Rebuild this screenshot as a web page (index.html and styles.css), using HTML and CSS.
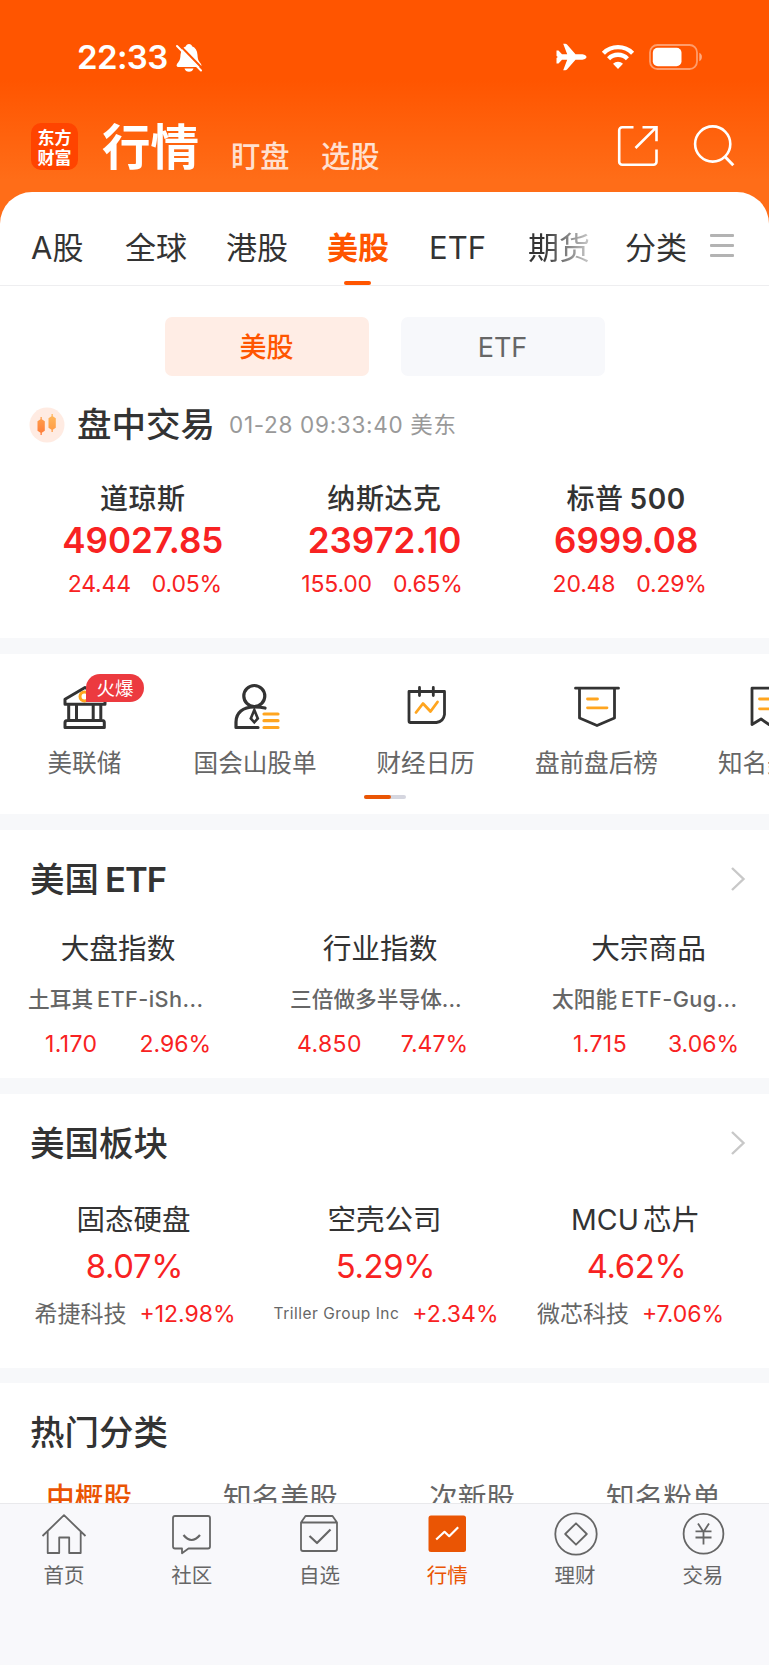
FILE: index.html
```html
<!DOCTYPE html>
<html lang="zh-CN">

<head>
    <meta charset="UTF-8">
    <meta name="viewport" content="width=device-width, initial-scale=1.0">
    <title>行情 - 东方财富</title>
    <link rel="stylesheet" href="styles.css">
</head>

<body>
    <header class="header">
        <div class="status-bar">
            <span class="time">22:33</span>
            <svg class="bell" width="26" height="28" viewBox="0 0 26 28">
                <path d="M13 0c-1.700 0-2.800 1-3 2.200C6.500 3.500 4.700 6.500 4.500 11c-.2 5-1.500 6.500-3.500 9-1 1.600-.2 3 1.200 3h21.600c1.400 0 2.200-1.400 1.200-3-2-2.500-3.300-4-3.500-9-.2-4.500-2-7.500-5.500-8.800C15.800 1 14.700 0 13 0z" fill="#fff" />
                <path d="M8.500 24.500h9c-.5 2-2.300 3.300-4.500 3.300s-4-1.300-4.500-3.300z" fill="#fff" />
                <path d="M0 4.500L5 9.500V0H0z" fill="#ff5500" />
                <path d="M2.500 0l24 24.500" stroke="#ff5500" stroke-width="2" />
                <path d="M1 2l24 24.500" stroke="#fff" stroke-width="2" stroke-linecap="round" />
            </svg>
            <div class="status-icons">
                <svg width="31" height="28" viewBox="0 0 31 28">
                    <path d="M30.500 14c0 1.500-2.500 2.800-5 2.800h-6L11 26.500c-.5.600-1 .8-1.700.8H7.200l4-10.500H6L2.500 20.500H.5V15L1.800 14 .5 13V7.500h2L6 11.200h5.200L7.200.7h2.100c.7 0 1.200.2 1.700.8l8.500 9.700h6c2.500 0 5 1.300 5 2.800z" fill="#fff" />
                </svg>
                <svg class="wifi" width="34" height="26" viewBox="0 0 34 26">
                    <g fill="none" stroke="#fff" stroke-width="4.400">
                        <path d="M2.400 9.200a20.700 20.700 0 0 1 29.200 0" />
                        <path d="M7.600 14.700a13.300 13.300 0 0 1 18.800 0" />
                    </g>
                    <path d="M17 25l-5-5.200a7.200 7.200 0 0 1 10 0z" fill="#fff" />
                </svg>
                <svg class="battery" width="54" height="26" viewBox="0 0 54 26">
                    <rect x="1" y="1" width="47" height="24" rx="7.500" fill="none" stroke="#fff" stroke-opacity=".42" stroke-width="1.800" />
                    <rect x="3.800" y="3.800" width="28.700" height="18.400" rx="5" fill="#fff" />
                    <path d="M50.300 8.800c1.800.7 2.600 2.300 2.600 4.200s-.8 3.500-2.600 4.200z" fill="#fff" fill-opacity=".5" />
                </svg>
            </div>
        </div>
        <div class="nav">
            <div class="logo">东方<br>财富</div>
            <h1 class="nav-title">行情</h1>
            <a class="nav-link">盯盘</a>
            <a class="nav-link">选股</a>
            <div class="nav-icons">
                <svg width="42" height="42" viewBox="0 0 42 42" fill="none" stroke="#fff" stroke-width="2.600">
                    <path d="M16.500 2.200H5.200a3 3 0 0 0-3 3v31.500a3 3 0 0 0 3 3h31.300a3 3 0 0 0 3-3V24.500M25.500 2.200h14v14M39 2.700L18.500 23" />
                </svg>
                <svg width="42" height="42" viewBox="0 0 42 42" fill="none" stroke="#fff" stroke-width="2.600">
                    <circle cx="19.700" cy="19" r="17.600" />
                    <path d="M31.800 31.500l8.500 8.700" stroke-width="3" />
                </svg>
            </div>
        </div>
    </header>

    <main class="page">
        <nav class="tabs">
            <a class="tab">A股</a>
            <a class="tab">全球</a>
            <a class="tab">港股</a>
            <a class="tab active">美股</a>
            <a class="tab">ETF</a>
            <a class="tab fade">期货</a>
            <a class="tab">分类</a>
            <span class="menu"><i></i><i></i><i></i></span>
        </nav>

        <section class="market">
            <div class="segment">
                <a class="seg on">美股</a>
                <a class="seg">ETF</a>
            </div>
            <div class="session">
                <svg width="36" height="36" viewBox="0 0 36 36">
                    <defs>
                        <linearGradient id="c1" x1="0" y1="0" x2="0" y2="1">
                            <stop offset="0" stop-color="#ffa04d" />
                            <stop offset="1" stop-color="#ff7a38" />
                        </linearGradient>
                        <linearGradient id="c2" x1="0" y1="0" x2="0" y2="1">
                            <stop offset="0" stop-color="#ffb85c" />
                            <stop offset="1" stop-color="#ff9a45" />
                        </linearGradient>
                    </defs>
                    <circle cx="18" cy="18" r="17.500" fill="#ffebe2" />
                    <path d="M12.800 10v2.300l3 2v9.500l-3 2V28h-1.300v-2.200l-3-2v-9.500l3-2V10z" fill="url(#c1)" />
                    <path d="M23.800 7v2.300l3 2v9.500l-3 2V25h-1.300v-2.200l-3-2v-9.500l3-2V7z" fill="url(#c2)" />
                </svg>
                <h2>盘中交易</h2>
                <span class="session-time">01-28 09:33:40 美东</span>
            </div>
            <div class="indices">
                <div class="index">
                    <div class="index-name">道琼斯</div>
                    <div class="index-value">49027.85</div>
                    <div class="index-change"><span>24.44</span><span>0.05%</span></div>
                </div>
                <div class="index">
                    <div class="index-name">纳斯达克</div>
                    <div class="index-value">23972.10</div>
                    <div class="index-change"><span>155.00</span><span>0.65%</span></div>
                </div>
                <div class="index">
                    <div class="index-name">标普<b>500</b></div>
                    <div class="index-value">6999.08</div>
                    <div class="index-change"><span>20.48</span><span>0.29%</span></div>
                </div>
            </div>
        </section>

        <section class="tools">
            <div class="tool-list">
                <a class="tool">
                    <svg width="48" height="48" viewBox="0 0 48 48" fill="none" stroke="#333" stroke-width="3" stroke-linejoin="round">
                        <circle cx="23.500" cy="18.500" r="4.500" stroke="#ffa51f" />
                        <path d="M4 26.200v-5L24 9.500l20 11.700v5zM7.700 26.500v16M15.500 26.500v16M32.200 26.500v16M39.800 26.500v16M6.500 42.500h34.800q2 0 2 2v5H4v-5q0-2 2.500-2z" />
                    </svg>
                    <em class="hot">火爆</em>
                    <span>美联储</span>
                </a>
                <a class="tool">
                    <svg width="48" height="48" viewBox="0 0 48 48" fill="none" stroke="#333" stroke-width="3.200" stroke-linecap="round">
                        <circle cx="22.300" cy="18" r="10.500" />
                        <path d="M26 49.500H4v-5.500C4 34.500 11 29 22 29q7 0 11 1" stroke-linejoin="round" />
                        <path d="M22.300 32l-3.500 8.500 3.500 3.800L25.800 40.500z" stroke-width="2.600" />
                        <path d="M32 36h14M32 42.700h14M32 49.500h14" stroke="#ffa51f" />
                    </svg>
                    <span>国会山股单</span>
                </a>
                <a class="tool">
                    <svg width="48" height="48" viewBox="0 0 48 48" fill="none" stroke="#333" stroke-width="2.800" stroke-linecap="round" stroke-linejoin="round">
                        <path d="M6 13.500h35.500v23q-1 7-8 8H7.500Q6 44.500 6 43zM16.500 9.500v8M30.300 9.500v8" />
                        <path d="M13 34.500l7-9 7.500 8 7-9.500" stroke="#ffa51f" />
                    </svg>
                    <span>财经日历</span>
                </a>
                <a class="tool">
                    <svg width="48" height="48" viewBox="0 0 48 48" fill="none" stroke="#333" stroke-width="2.800" stroke-linecap="round" stroke-linejoin="round">
                        <path d="M2.500 10.200h43M6.500 10.500V40L24 47.500 41.500 40V10.500" />
                        <path d="M14.500 21h10M14.500 29.800h19.500" stroke="#ffa51f" />
                    </svg>
                    <span>盘前盘后榜</span>
                </a>
                <a class="tool">
                    <svg width="48" height="48" viewBox="0 0 48 48" fill="none" stroke="#333" stroke-width="2.800" stroke-linecap="round" stroke-linejoin="round">
                        <path d="M8 10.200h34V46.500l-8-5.500-9 5.500-8-5.500-9 5.500z" />
                        <path d="M15.500 21h14M15.500 30.800h14" stroke="#ffa51f" />
                    </svg>
                    <span>知名美股</span>
                </a>
            </div>
            <div class="pager"><i></i></div>
        </section>

        <section class="etf">
            <div class="section-head">
                <h2>美国<b>ETF</b></h2>
                <svg width="16" height="28" viewBox="0 0 16 28" fill="none" stroke="#c8c8c8" stroke-width="2.400">
                    <path d="M2 3l11.500 11L2 25" />
                </svg>
            </div>
            <div class="etf-list">
                <div class="etf-item">
                    <div class="etf-type">大盘指数</div>
                    <div class="etf-name">土耳其<b>ETF-iSh...</b></div>
                    <div class="etf-change"><span>1.170</span><span>2.96%</span></div>
                </div>
                <div class="etf-item">
                    <div class="etf-type">行业指数</div>
                    <div class="etf-name">三倍做多半导体...</div>
                    <div class="etf-change"><span>4.850</span><span>7.47%</span></div>
                </div>
                <div class="etf-item">
                    <div class="etf-type">大宗商品</div>
                    <div class="etf-name">太阳能<b>ETF-Gug...</b></div>
                    <div class="etf-change"><span>1.715</span><span>3.06%</span></div>
                </div>
            </div>
        </section>

        <section class="sector">
            <div class="section-head">
                <h2>美国板块</h2>
                <svg width="16" height="28" viewBox="0 0 16 28" fill="none" stroke="#c8c8c8" stroke-width="2.400">
                    <path d="M2 3l11.500 11L2 25" />
                </svg>
            </div>
            <div class="sector-list">
                <div class="sector-item">
                    <div class="sector-name">固态硬盘</div>
                    <div class="sector-value">8.07%</div>
                    <div class="sector-stock"><span>希捷科技</span><em>+12.98%</em></div>
                </div>
                <div class="sector-item">
                    <div class="sector-name">空壳公司</div>
                    <div class="sector-value">5.29%</div>
                    <div class="sector-stock"><span class="small">Triller Group Inc</span><em>+2.34%</em></div>
                </div>
                <div class="sector-item">
                    <div class="sector-name"><b>MCU</b>芯片</div>
                    <div class="sector-value">4.62%</div>
                    <div class="sector-stock"><span>微芯科技</span><em>+7.06%</em></div>
                </div>
            </div>
        </section>

        <section class="category">
            <div class="section-head">
                <h2>热门分类</h2>
            </div>
            <div class="category-tabs">
                <a class="active">中概股</a>
                <a>知名美股</a>
                <a>次新股</a>
                <a>知名粉单</a>
            </div>
        </section>
    </main>

    <footer class="tabbar">
        <a class="bar-item">
            <svg width="46" height="46" viewBox="0 0 46 46">
                <path d="M1.500 24L23 3.200 44.500 24M6.700 19.500V41h11.500V25.500h10V41h11.500V19.500" />
            </svg>
            <span>首页</span>
        </a>
        <a class="bar-item">
            <svg width="46" height="46" viewBox="0 0 46 46">
                <path d="M6 4h33q2 0 2 2v28.500q0 2-2 2H19.500L13 41.300v-4.800H6q-2 0-2-2V6q0-2 2-2z" />
                <path d="M14.500 23q8 10 16.500 0" stroke-width="2.200" />
            </svg>
            <span>社区</span>
        </a>
        <a class="bar-item">
            <svg width="46" height="46" viewBox="0 0 46 46">
                <path d="M5 10.500L9.500 4h27l4.500 6.500v26.500q0 2-2 2h-32q-2 0-2-2zM5 10.500h36" />
                <path d="M13.500 24l7.500 7 13.500-13.500" stroke-width="2.200" />
            </svg>
            <span>自选</span>
        </a>
        <a class="bar-item active">
            <svg width="46" height="46" viewBox="0 0 46 46">
                <rect x="4.500" y="3.500" width="37.500" height="36.500" rx="2.500" fill="#ea5504" stroke="none" />
                <path d="M12.200 27.500l8.300-7.700 4.700 4.400 9-9" stroke="#fff" stroke-width="2.200" />
            </svg>
            <span>行情</span>
        </a>
        <a class="bar-item">
            <svg width="46" height="46" viewBox="0 0 46 46">
                <circle cx="24" cy="22" r="20.700" />
                <path d="M24 11.300L34.800 22 24 32.700 13.200 22z" />
            </svg>
            <span>理财</span>
        </a>
        <a class="bar-item">
            <svg width="46" height="46" viewBox="0 0 46 46">
                <circle cx="23.500" cy="21.700" r="19.900" />
                <path d="M18 11.500L23.500 20l5.500-8.500M23.500 20v12.500M15.500 19.300h16M15.500 25.500h16" />
            </svg>
            <span>交易</span>
        </a>
    </footer>
</body>

</html>
```

FILE: styles.css
```css
* {
    box-sizing: border-box;
}

body {
    margin: 0;
    width: 769px;
    height: 1665px;
    display: flex;
    flex-direction: column;
    overflow: hidden;
    font-family: Inter, "Noto Sans CJK SC", sans-serif;
    color: #333;
    background: #fff;
}

h1, h2 {
    margin: 0;
}

b {
    font-weight: inherit;
}

em, i {
    font-style: normal;
}

svg {
    display: block;
    flex: none;
    overflow: visible;
}

/* Header */
.header {
    flex: none;
    height: 224px;
    background: linear-gradient(#ff5500 0, #ff5500 80px, #ff6d18 180px, #ff6d18 224px);
    color: #fff;
}

.status-bar {
    display: flex;
    align-items: center;
    height: 114px;
    padding: 0 66px 0 77px;
}

.time {
    font-size: 33px;
    font-weight: 600;
    letter-spacing: -0.6px;
    width: 99px;
}

.bell {
    margin-top: 1px;
}

.status-icons {
    display: flex;
    align-items: center;
    margin-left: auto;
}

.wifi {
    margin-left: 14px;
}

.battery {
    margin-left: 14px;
}

.nav {
    display: flex;
    height: 64px;
    padding: 0 34px 0 31px;
}

.logo {
    width: 47px;
    height: 47px;
    margin-top: 9px;
    padding-top: 4px;
    border-radius: 10px;
    background: #ff4400;
    font-family: "Noto Sans CJK SC", sans-serif;
    font-size: 17px;
    font-weight: 700;
    line-height: 19.500px;
    text-align: center;
}

.nav-title {
    margin-left: 24px;
    width: 129px;
    font-size: 48.500px;
    font-weight: 700;
    line-height: 67px;
}

.nav-link {
    width: 90px;
    font-size: 29.300px;
    font-weight: 500;
    line-height: 86px;
    color: #ffe0d0;
}

.nav-icons {
    display: flex;
    gap: 34px;
    margin-left: auto;
    padding-top: 11px;
}

/* Page */
.page {
    flex: none;
    height: 1311px;
    margin-top: -32px;
    border-radius: 32px 32px 0 0;
    background: #fff;
    overflow: hidden;
}

.tabs {
    display: flex;
    height: 94px;
    padding-left: 31px;
    border-bottom: 1px solid #eeeef0;
    font-size: 31px;
    line-height: 111px;
    white-space: nowrap;
}

.tab {
    position: relative;
    flex: none;
    width: 101px;
}

.tab:first-child {
    width: 94px;
}

.tab:nth-child(5) {
    width: 100px;
    padding-left: 1px;
}

.tab:nth-child(6) {
    width: 97px;
}

.tab:nth-child(7) {
    width: 85px;
}

.tab.active {
    color: #ff5500;
    font-weight: 700;
}

.tab.active::after {
    content: "";
    position: absolute;
    left: 17px;
    bottom: 0;
    width: 27px;
    height: 4px;
    border-radius: 2px;
    background: #ff5500;
}

.tab.fade {
    color: transparent;
    background: linear-gradient(90deg, #333 15px, #ccc 62px);
    background-clip: text;
    -webkit-background-clip: text;
}

.menu {
    display: flex;
    flex: none;
    flex-direction: column;
    gap: 7px;
    width: 24px;
    padding-top: 42px;
}

.menu i {
    height: 3px;
    border-radius: 1px;
    background: #b3b3b3;
}

/* Market overview */
.market {
    height: 368px;
    padding-top: 31px;
    border-bottom: 16px solid #f7f8fa;
}

.segment {
    display: flex;
    justify-content: center;
    gap: 32px;
}

.seg {
    width: 204px;
    height: 59px;
    border-radius: 7px;
    background: #f7f8fb;
    font-size: 27px;
    line-height: 62px;
    text-align: center;
    color: #666;
}

.seg.on {
    background: #ffede5;
    color: #ff5500;
    font-weight: 500;
}

.session {
    display: flex;
    align-items: center;
    height: 50px;
    margin-top: 24px;
    padding-left: 29px;
}

.session h2 {
    width: 152px;
    margin-left: 12px;
    font-size: 34.500px;
    font-weight: 500;
    line-height: 52px;
}

.session-time {
    font-size: 22.500px;
    line-height: 52px;
    letter-spacing: 0.7px;
    color: #999;
}

.indices {
    display: grid;
    grid-template-columns: repeat(3, 1fr);
    padding: 27px 22px 0;
    text-align: center;
}

.index-name {
    font-size: 28px;
    font-weight: 500;
    line-height: 44px;
    letter-spacing: 0.6px;
}

.index-name b {
    margin-left: 6px;
    font-weight: 600;
}

.index-value {
    margin-top: -2px;
    font-size: 35px;
    font-weight: 600;
    line-height: 42px;
    color: #f82222;
}

.index-change {
    display: flex;
    justify-content: center;
    gap: 21px;
    margin-top: 1px;
    padding-left: 4px;
    font-size: 23px;
    line-height: 44px;
    letter-spacing: -0.2px;
    color: #f82222;
}

.index:nth-child(2) .index-change {
    padding: 0 5px 0 0;
}

.index:nth-child(3) .index-change {
    padding-left: 7px;
}

/* Shortcuts */
.tools {
    height: 176px;
    border-bottom: 16px solid #f7f8fa;
    overflow: hidden;
}

.tool-list {
    display: flex;
    width: 860px;
    height: 141px;
}

.tool {
    position: relative;
    flex: none;
    width: 170.700px;
    padding-top: 24px;
    display: flex;
    flex-direction: column;
    align-items: center;
    font-size: 24.600px;
    line-height: 36px;
    color: #666;
}

.tool span {
    margin: 19px 2px 0 0;
}

.hot {
    position: absolute;
    left: 86px;
    top: 20px;
    width: 58px;
    height: 28px;
    border-radius: 14px 14px 14px 0;
    background: #ec3a3f;
    color: #fff;
    font-size: 18.500px;
    line-height: 28px;
    text-align: center;
}

.pager {
    width: 42px;
    height: 4px;
    margin: 0 auto;
    border-radius: 2px;
    background: #d5d6df;
}

.pager i {
    display: block;
    width: 27px;
    height: 4px;
    border-radius: 2px;
    background: #ea5504;
}

/* Section titles */
.section-head {
    display: flex;
    align-items: center;
    justify-content: space-between;
    height: 98px;
    padding: 0 23px 0 30px;
}

.section-head h2 {
    font-size: 34.500px;
    font-weight: 500;
    line-height: 50px;
    padding-top: 2px;
}

.section-head b {
    margin-left: 6px;
    font-weight: 600;
    letter-spacing: -1px;
}

/* ETF */
.etf {
    height: 264px;
    border-bottom: 16px solid #f7f8fa;
}

.etf-list {
    display: grid;
    grid-template-columns: 262px 262px 200px;
    padding-left: 28px;
}

.etf-type {
    width: 180px;
    font-size: 28.700px;
    line-height: 42px;
    text-align: center;
}

.etf-item:last-child .etf-type {
    width: 193px;
}

.etf-name {
    margin-top: 9px;
    font-size: 21.700px;
    font-weight: 500;
    line-height: 40px;
    color: #666;
}

.etf-name b {
    margin-left: 4px;
    letter-spacing: 0.4px;
}

.etf-change {
    display: flex;
    justify-content: space-between;
    width: 183px;
    margin-top: 1px;
    padding-left: 17px;
    font-size: 23px;
    line-height: 48px;
    color: #f82222;
}

.etf-change span:first-child {
    letter-spacing: 0.4px;
}

.etf-item:nth-child(2) .etf-change {
    width: 178px;
    padding-left: 7px;
}

.etf-item:last-child .etf-change {
    width: 187px;
    padding-left: 21px;
}

/* Sectors */
.sector {
    height: 289px;
    border-bottom: 15px solid #f7f8fa;
}

.sector-list {
    display: grid;
    grid-template-columns: repeat(3, 251px);
    justify-content: center;
    text-align: center;
}

.sector-name {
    margin-top: 6px;
    font-size: 28.500px;
    line-height: 44px;
}

.sector-name b {
    margin-right: 4px;
}

.sector-value {
    padding-left: 2px;
    font-size: 32.800px;
    line-height: 48px;
    letter-spacing: -0.3px;
    color: #f82222;
}

.sector-stock {
    display: flex;
    justify-content: center;
    align-items: center;
    gap: 13px;
    margin-top: 2px;
    padding-left: 3px;
    font-size: 23px;
    line-height: 44px;
    white-space: nowrap;
    color: #666;
}

.sector-item:last-child .sector-stock {
    padding: 0 10px 0 0;
}

.sector-stock .small {
    font-size: 15.500px;
    letter-spacing: 0.5px;
}

.sector-stock em {
    color: #f82222;
}

/* Hot categories */
.category-tabs {
    display: flex;
    margin-top: -4px;
    padding-left: 46px;
    font-size: 28.700px;
    line-height: 42px;
    white-space: nowrap;
    color: #666;
}

.category-tabs a {
    flex: none;
    width: 206px;
}

.category-tabs a:first-child,
.category-tabs a:nth-child(3) {
    width: 177px;
}

.category-tabs a:last-child {
    width: 116px;
}

.category-tabs .active {
    color: #ea5504;
    font-weight: 500;
}

/* Bottom bar */
.tabbar {
    flex: 1;
    display: flex;
    border-top: 1px solid #e9e9ec;
    background: #f8f8fb;
}

.bar-item {
    width: 127.800px;
    padding-top: 8px;
    display: flex;
    flex-direction: column;
    align-items: center;
    font-size: 20.500px;
    line-height: 32px;
    color: #666;
}

.bar-item svg {
    fill: none;
    stroke: #666;
    stroke-width: 1.800;
    stroke-linejoin: round;
}

.bar-item span {
    margin-top: 2px;
}

.bar-item.active {
    color: #ea5504;
}
```
